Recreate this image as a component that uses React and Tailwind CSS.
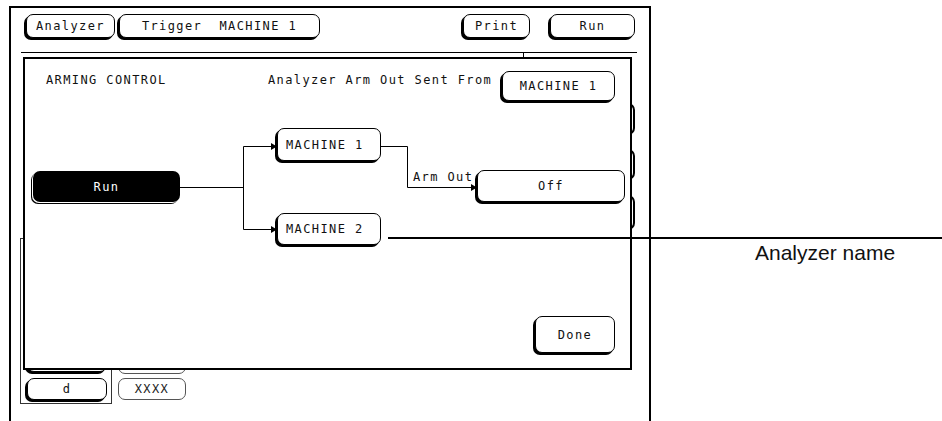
import React from "react";

const mono =
  "font-['DejaVu_Sans_Mono',monospace] text-[12px] leading-[12px] tracking-[1.4px] whitespace-pre";

function Btn({ className = "", children, shadow = true, textClass = "text-[#111]" }) {
  return (
    <div
      className={`flex items-center justify-center rounded-[7px] border border-black bg-white ${
        shadow ? "shadow-[-2px_2px_0_0_#000]" : ""
      } ${className}`}
    >
      {children ? <span className={`${mono} ${textClass}`}>{children}</span> : null}
    </div>
  );
}

function GhostBtn({ className = "", children }) {
  return (
    <div
      className={`flex items-center justify-center rounded-[7px] border border-[#555] bg-white ${className}`}
    >
      {children ? <span className={`${mono} text-[#222]`}>{children}</span> : null}
    </div>
  );
}

function Node({ className = "", children }) {
  return (
    <div
      className={`absolute flex items-center justify-start pl-[8px] rounded-[7px] border border-black bg-white shadow-[-2px_2px_0_0_#000] ${className}`}
    >
      <span className={`${mono} text-[#111]`}>{children}</span>
    </div>
  );
}

export default function App() {
  return (
    <div className="relative w-[942px] h-[421px] overflow-hidden bg-white">
      {/* instrument screen frame */}
      <div className="ml-[9px] mt-[6px] w-[642px] h-[430px] border-2 border-b-0 border-black flex flex-col">
        <div className="flex pt-[6px] pl-[15px] pr-[14px]">
          <Btn className="w-[89px] h-[24px]">Analyzer</Btn>
          <Btn className="ml-[4px] w-[201px] h-[24px]">Trigger  MACHINE 1</Btn>
          <Btn className="ml-auto w-[67px] h-[24px]">Print</Btn>
          <Btn className="ml-[20px] w-[85px] h-[24px]">Run</Btn>
        </div>
        <div className="mt-[14px] ml-[10px] mr-[12px] border-t border-black" />
        <div className="flex items-start">
          <div className="ml-[9px] mt-[185px] w-[92px] h-[166px] border border-[#333] flex flex-col justify-end pl-[6px] pr-[4px] pb-[3px] gap-[6px]">
            <Btn className="h-[22px] w-full" />
            <Btn className="h-[22px] w-full">d</Btn>
          </div>
          <div className="ml-[6px] mt-[299px] w-[68px] flex flex-col gap-[4px]">
            <GhostBtn className="h-[22px]" />
            <GhostBtn className="h-[22px]">XXXX</GhostBtn>
          </div>
          <div className="ml-auto mr-[12px] w-[114px] h-[300px] border-l border-black flex flex-col items-end pr-[2px]">
            <div className="mt-[50px] w-[100px] h-[32px] rounded-[7px] border-2 border-black" />
            <div className="mt-[14px] w-[100px] h-[31px] rounded-[7px] border-2 border-black" />
            <div className="mt-[15px] w-[100px] h-[35px] rounded-[7px] border-2 border-black" />
          </div>
        </div>
      </div>

      {/* Arming control dialog */}
      <div className="absolute left-[23px] top-[57px] w-[609px] h-[313px] border-2 border-black bg-white flex flex-col">
        <div className="flex items-start pt-[12px] pl-[21px] pr-[15px]">
          <span className={`${mono} text-[#111] w-[222px] mt-[3px]`}>ARMING CONTROL</span>
          <span className={`${mono} text-[#111] mt-[3px]`}>Analyzer Arm Out Sent From</span>
          <Btn className="ml-auto w-[113px] h-[30px]">MACHINE 1</Btn>
        </div>

        <svg
          className="absolute left-0 top-0 w-[605px] h-[309px] pointer-events-none"
          viewBox="0 0 605 309"
        >
          <g stroke="#000" strokeWidth="1" fill="none">
            <path d="M155 128.5 H218.5" />
            <path d="M218.5 87.5 V170.5" />
            <path d="M218.5 87.5 H247" />
            <path d="M218.5 170.5 H247" />
            <path d="M356 87.5 H382.5 V128.5 H447" />
          </g>
          <g fill="#000">
            <polygon points="246,84 252,87.5 246,91" />
            <polygon points="246,167 252,170.5 246,174" />
            <polygon points="446,125 452,128.5 446,132" />
          </g>
        </svg>

        <div className="absolute left-[8px] top-[112px] w-[147px] h-[31px] rounded-[7px] bg-black flex items-center justify-center shadow-[-1px_1px_0_0_#fff,-2px_2px_0_0_#000]">
          <span className={`${mono} text-white`}>Run</span>
        </div>
        <Node className="left-[252px] top-[69px] w-[104px] h-[33px]">MACHINE 1</Node>
        <Node className="left-[252px] top-[154px] w-[104px] h-[32px]">MACHINE 2</Node>
        <span className={`${mono} text-[#111] absolute left-[388px] top-[112px]`}>Arm Out</span>
        <div className="absolute left-[452px] top-[111px] w-[148px] h-[32px] flex items-center justify-center rounded-[7px] border border-black bg-white shadow-[-2px_2px_0_0_#000]">
          <span className={`${mono} text-[#111]`}>Off</span>
        </div>

        <div className="mt-auto flex justify-end pr-[15px] pb-[15px]">
          <Btn className="w-[80px] h-[37px]">Done</Btn>
        </div>
      </div>

      {/* callout */}
      <div className="absolute left-[388px] top-[237px] w-[554px] h-[2px] bg-black" />
      <span className="absolute left-[755px] top-[241px] font-['Liberation_Sans',Arial,sans-serif] text-[21px] leading-[24px] text-[#111]">
        Analyzer name
      </span>
    </div>
  );
}
